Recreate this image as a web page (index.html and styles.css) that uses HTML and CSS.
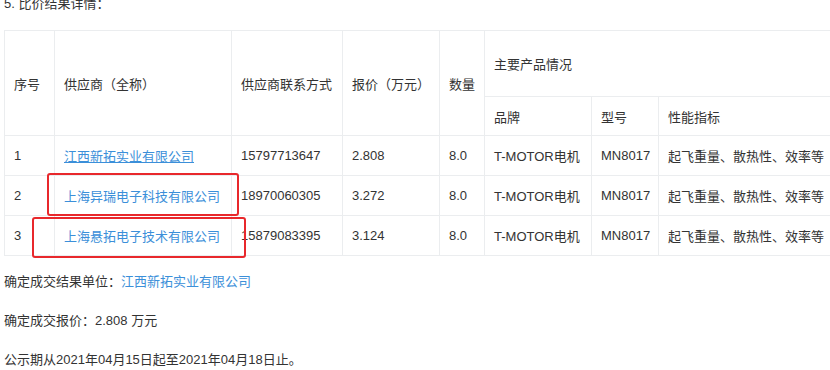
FILE: index.html
```html
<!DOCTYPE html>
<html lang="zh-CN">
<head>
  <meta charset="UTF-8">
  <title>比价结果详情</title>
  <link rel="stylesheet" href="styles.css">
</head>
<body>
  <div class="article">
    <p class="section-title">5. 比价结果详情：</p>

    <div class="table-wrap">
      <table class="result-table">
        <colgroup>
          <col style="width: 50px">
          <col style="width: 177px">
          <col style="width: 111px">
          <col style="width: 97px">
          <col style="width: 45px">
          <col style="width: 107px">
          <col style="width: 67px">
          <col style="width: 220px">
        </colgroup>
        <tr class="head-top">
          <td rowspan="2">序号</td>
          <td rowspan="2">供应商（全称）</td>
          <td rowspan="2">供应商联系方式</td>
          <td rowspan="2">报价（万元）</td>
          <td rowspan="2">数量</td>
          <td colspan="3">主要产品情况</td>
        </tr>
        <tr class="head-sub">
          <td>品牌</td>
          <td>型号</td>
          <td>性能指标</td>
        </tr>
        <tr>
          <td>1</td>
          <td><a class="link underline" href="#">江西新拓实业有限公司</a></td>
          <td>15797713647</td>
          <td>2.808</td>
          <td>8.0</td>
          <td>T-MOTOR电机</td>
          <td>MN8017</td>
          <td>起飞重量、散热性、效率等</td>
        </tr>
        <tr>
          <td>2</td>
          <td><a class="link" href="#">上海异瑞电子科技有限公司</a></td>
          <td>18970060305</td>
          <td>3.272</td>
          <td>8.0</td>
          <td>T-MOTOR电机</td>
          <td>MN8017</td>
          <td>起飞重量、散热性、效率等</td>
        </tr>
        <tr>
          <td>3</td>
          <td><a class="link" href="#">上海悬拓电子技术有限公司</a></td>
          <td>15879083395</td>
          <td>3.124</td>
          <td>8.0</td>
          <td>T-MOTOR电机</td>
          <td>MN8017</td>
          <td>起飞重量、散热性、效率等</td>
        </tr>
      </table>

      <!-- hand-drawn highlight marks over the table -->
      <div class="mark mark-one"></div>
      <div class="mark mark-two"></div>
    </div>

    <p class="line first">确定成交结果单位：<a class="link" href="#">江西新拓实业有限公司</a></p>
    <p class="line">确定成交报价：2.808 万元</p>
    <p class="line">公示期从2021年04月15日起至2021年04月18日止。</p>
  </div>
</body>
</html>
```

FILE: styles.css
```css
body {
  margin: 0;
  background: #fff;
  color: #333;
  font-family: "Liberation Sans", Arial, "Noto Sans CJK SC", sans-serif;
  font-size: 13px;
  overflow: hidden;
}

.article {
  padding-left: 4px;
}

.section-title {
  margin: -6px 0 0;
  line-height: 20px;
}

.table-wrap {
  position: relative;
  margin-top: 16px;
}

.result-table {
  border-collapse: collapse;
  table-layout: fixed;
  width: 874px;
}

.result-table td {
  border: 1px solid #ebedef;
  padding: 0 9px;
  height: 39px;
  vertical-align: middle;
  white-space: nowrap;
  overflow: hidden;
}

.result-table .head-top td {
  height: 65px;
}

.result-table .head-sub td {
  height: 38px;
}

.link {
  color: #3b8fd9;
  text-decoration: none;
}

.link.underline {
  text-decoration: underline;
}

.mark {
  position: absolute;
  border: 2.5px solid #e8282c;
  border-radius: 3px;
}

.mark-one {
  left: 43px;
  top: 143px;
  width: 188px;
  height: 39px;
}

.mark-two {
  left: 28px;
  top: 187px;
  width: 210px;
  height: 37px;
}

.line {
  margin: 0;
  line-height: 39px;
}

.line.first {
  margin-top: 6px;
}
```
